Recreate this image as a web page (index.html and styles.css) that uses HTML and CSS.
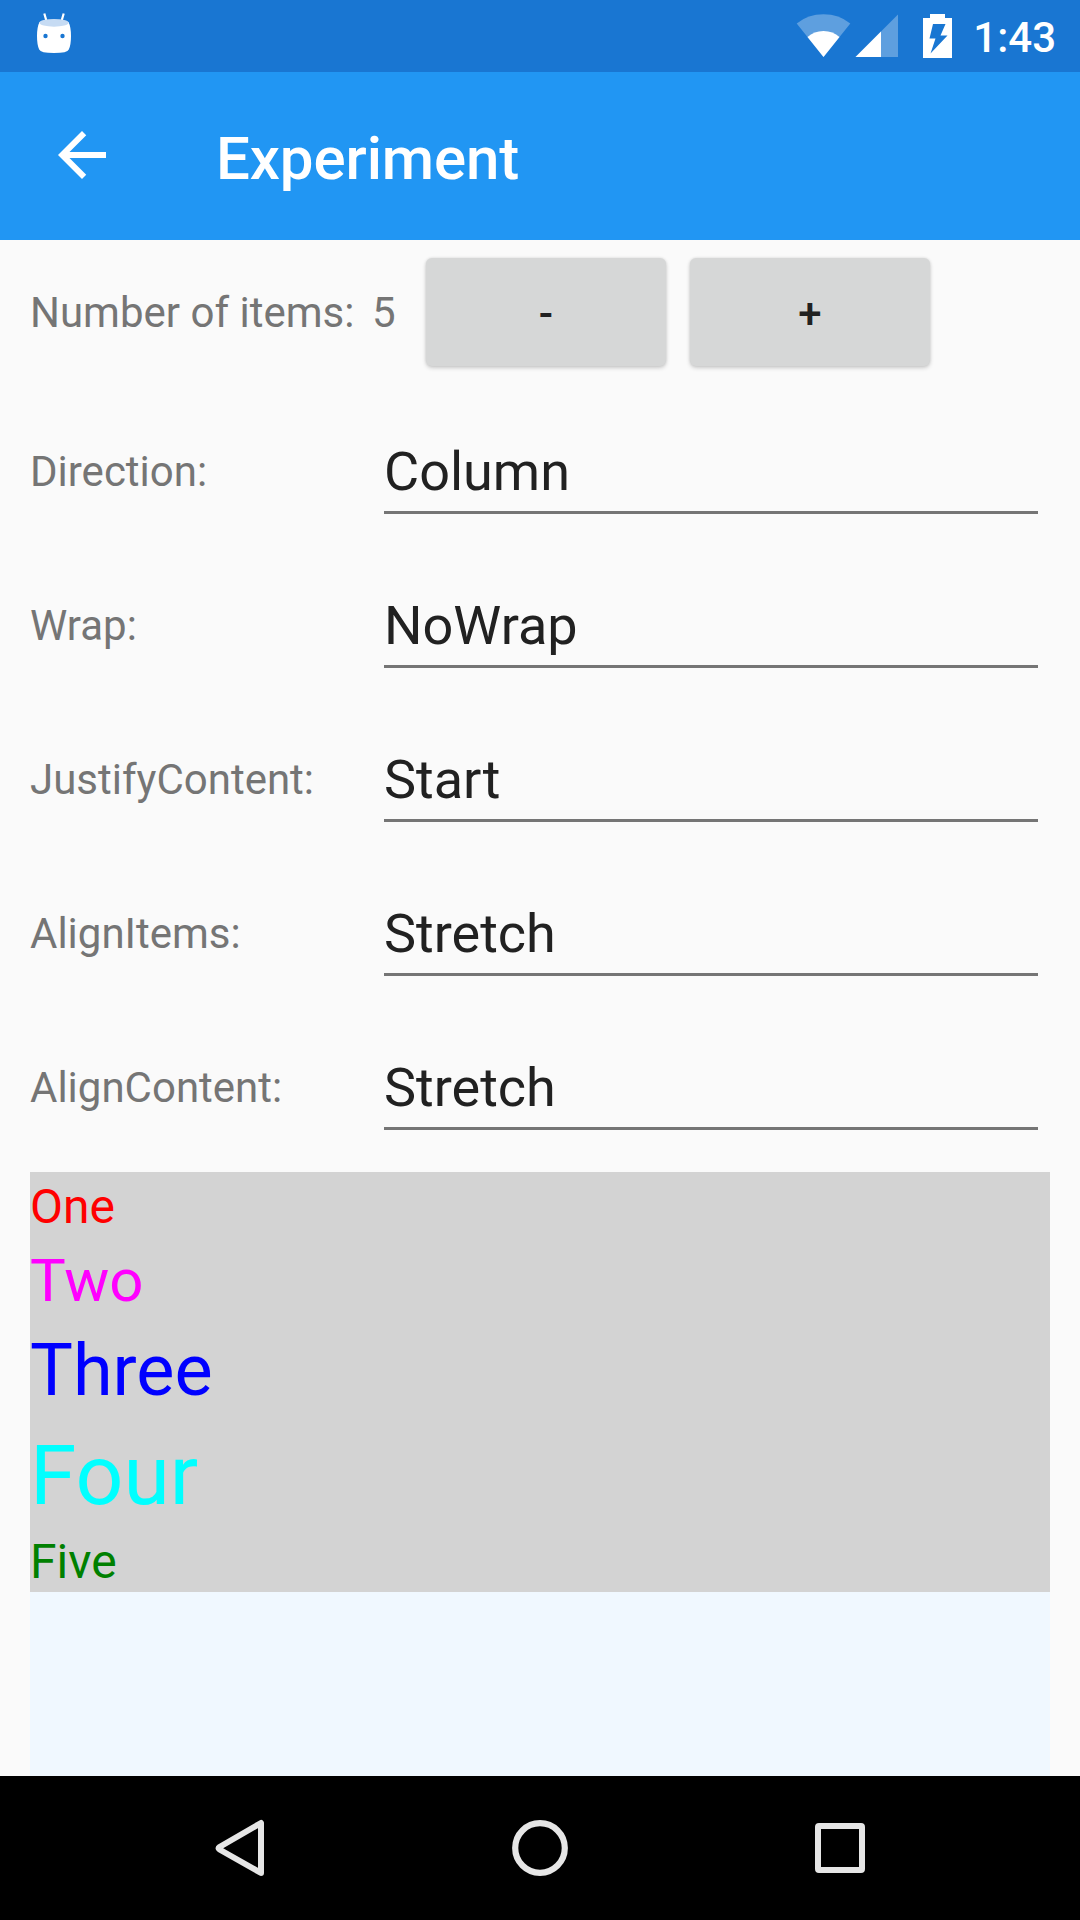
FILE: index.html
```html
<!DOCTYPE html>
<html lang="en">
<head>
<meta charset="utf-8">
<title>Experiment</title>
<link rel="stylesheet" href="styles.css">
</head>
<body>
<div class="status-bar">
  <svg class="droid" width="36" height="42" viewBox="36 12 36 42">
    <path d="M44.3 13.500L46.600 21.500M63.700 13.500L61.400 21.500" stroke="#fff" stroke-width="2.200" fill="none"/>
    <path d="M39.500 22Q54 17.500 68.500 22Q71 27 71 36Q71 45 68.800 49.500Q67.500 53 54 53Q40.500 53 39.200 49.500Q37 45 37 36Q37 27 39.500 22Z" fill="#fff"/>
    <ellipse cx="54" cy="22.800" rx="14.600" ry="3.900" fill="#c6dbf3"/>
    <circle cx="45.500" cy="36" r="2.200" fill="#1976d2"/>
    <circle cx="62.500" cy="36" r="2.200" fill="#1976d2"/>
  </svg>
  <svg class="signals" width="160" height="48" viewBox="795 12 160 48">
    <path d="M823.500 57L796.700 23.500Q808 14.300 823.500 14.300Q839 14.300 850.300 23.500Z" fill="#fff" fill-opacity=".3"/>
    <path d="M823.500 57L807.500 37Q814 31 823.500 31Q833 31 839.500 37Z" fill="#fff"/>
    <path d="M855.500 57L898 14.500V57Z" fill="#fff" fill-opacity=".3"/>
    <path d="M855.500 57L881 31.500V57Z" fill="#fff"/>
    <path fill-rule="evenodd" d="M923 18H930V14H945V18H952V58H923ZM933 24L929.500 38.500H935.500L930.500 53.500L947.500 35.500H940.500L945.500 24Z" fill="#fff"/>
  </svg>
  <span class="clock">1:43</span>
</div>
<header class="app-bar">
  <svg class="back" width="72" height="72" viewBox="0 0 24 24"><path d="M20 11H7.830l5.590-5.590L12 4l-8 8 8 8 1.410-1.410L7.830 13H20v-2z" fill="#fff"/></svg>
  <h1 class="title">Experiment</h1>
</header>
<main class="page">
  <div class="count-row">
    <span class="count-label">Number of items:</span>
    <span class="count">5</span>
    <button class="step">-</button>
    <button class="step">+</button>
  </div>
  <div class="field-row"><span class="label">Direction:</span><div class="field">Column</div></div>
  <div class="field-row"><span class="label">Wrap:</span><div class="field">NoWrap</div></div>
  <div class="field-row"><span class="label">JustifyContent:</span><div class="field">Start</div></div>
  <div class="field-row"><span class="label">AlignItems:</span><div class="field">Stretch</div></div>
  <div class="field-row"><span class="label">AlignContent:</span><div class="field">Stretch</div></div>
  <div class="preview">
    <div class="items">
      <div class="item one">One</div>
      <div class="item two">Two</div>
      <div class="item three">Three</div>
      <div class="item four">Four</div>
      <div class="item five">Five</div>
    </div>
  </div>
</main>
<nav class="nav-bar">
  <svg width="60" height="60" viewBox="0 0 60 60"><path d="M51 5V55L9.500 31.500Q7.500 30.300 9.500 29L51 5Z" fill="none" stroke="#e6e6e6" stroke-width="6" stroke-linejoin="round"/></svg>
  <svg width="60" height="60" viewBox="0 0 60 60"><circle cx="30" cy="30" r="24.800" fill="none" stroke="#e6e6e6" stroke-width="6.200"/></svg>
  <svg width="60" height="60" viewBox="0 0 60 60"><path fill-rule="evenodd" d="M9 5H51Q55 5 55 9V51Q55 55 51 55H9Q5 55 5 51V9Q5 5 9 5ZM11 11V49H49V11Z" fill="#e6e6e6"/></svg>
</nav>
</body>
</html>
```
FILE: styles.css
```css
* { box-sizing: border-box; }

body {
  margin: 0;
  width: 1080px;
  height: 1920px;
  display: flex;
  flex-direction: column;
  overflow: hidden;
  background: #fafafa;
  font-family: Roboto, sans-serif;
  color: #757575;
}

svg { display: block; flex: none; }

.status-bar {
  height: 72px;
  flex: none;
  display: flex;
  align-items: flex-start;
  padding: 12px 24px 0 36px;
  background: #1976d2;
}

.signals { margin-left: auto; }

.clock {
  width: 101px;
  text-align: right;
  font-size: 42px;
  font-weight: 500;
  line-height: 52px;
  color: #fff;
}

.app-bar {
  height: 168px;
  flex: none;
  display: flex;
  align-items: flex-start;
  padding: 47px 46px 0;
  background: #2196f3;
}

.title {
  margin: 0 0 0 98px;
  font-size: 60px;
  font-weight: 500;
  line-height: 79px;
  letter-spacing: -.1px;
  color: #fff;
}

.page {
  flex: 1;
  min-height: 0;
  display: flex;
  flex-direction: column;
  padding: 0 30px;
}

.count-row {
  height: 150px;
  flex: none;
  display: flex;
  padding-top: 18px;
  font-size: 42px;
  line-height: 109px;
}

.count-label { width: 342px; white-space: nowrap; }
.count { width: 54px; }

.step {
  width: 240px;
  height: 108px;
  margin: 0 24px 0 0;
  padding: 3px 0 0;
  border: 0;
  border-radius: 6px;
  background: #d6d7d7;
  box-shadow: 0 2px 4px rgba(0, 0, 0, .18), 0 0 3px rgba(0, 0, 0, .1);
  font: 500 42px Roboto, sans-serif;
  color: #212121;
}

.field-row {
  height: 154px;
  flex: none;
  display: flex;
  align-items: flex-start;
  padding: 42px 12px 0 0;
  line-height: 79px;
}

.label { width: 354px; font-size: 42px; }

.field {
  flex: 1;
  border-bottom: 3px solid #757575;
  font-size: 54px;
  color: #212121;
}

.preview {
  flex: 1;
  margin-top: 12px;
  background: #f0f8ff;
}

.items { background: #d3d3d3; }

.one, .five { padding-top: 4px; font-size: 48px; line-height: 61px; }
.two { padding-top: 6px; font-size: 60px; line-height: 75px; color: #f0f; }
.three { padding-top: 8px; font-size: 72px; line-height: 89px; color: #00f; }
.four { padding-top: 9px; font-size: 84px; line-height: 103px; color: #0ff; }
.one { color: #f00; }
.five { color: #008000; }

.nav-bar {
  height: 144px;
  flex: none;
  display: flex;
  justify-content: center;
  align-items: center;
  gap: 240px;
  background: #000;
}
```
